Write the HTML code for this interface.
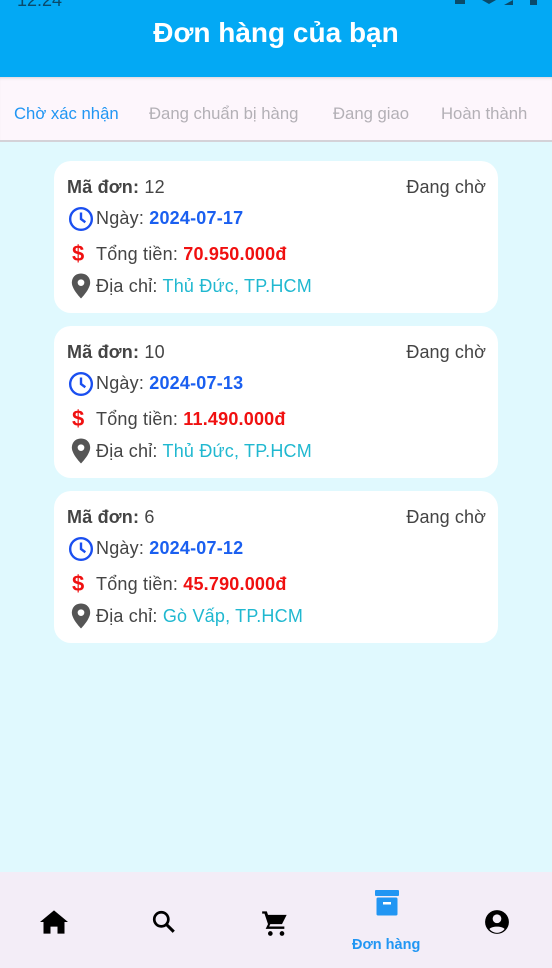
<!DOCTYPE html>
<html><head><meta charset="utf-8"><style>
*{margin:0;padding:0;box-sizing:border-box}
body{width:552px;height:968px;overflow:hidden;background:#e0f9fe;font-family:"Liberation Sans",sans-serif;position:relative}
.hdr{position:absolute;left:0;top:0;width:552px;height:77px;background:#03a9f4}
.hdr h1{position:absolute;top:17px;width:100%;text-align:center;color:#fff;font-size:28px;font-weight:bold}
.sb{position:absolute;top:-10px;left:17px;color:#0a4a6a;font-size:18px}
.tabs{position:absolute;top:77px;left:0;width:552px;height:65px;background:#fdf6fc;border-bottom:2px solid #d4d2d8;box-shadow:inset 0 3px 3px -2px rgba(0,0,0,.15)}
.tabs span{position:absolute;top:27px;font-size:16.7px;color:#b3b0b6;white-space:nowrap}
.card{position:absolute;left:54px;width:444px;height:152px;background:#fff;border-radius:17px}
.row{position:absolute;left:13px;font-size:18px;letter-spacing:0.2px;color:#444;white-space:nowrap}
.st{position:absolute;right:12px;top:15px;font-size:18px;letter-spacing:0.1px;color:#444}
.b{font-weight:bold}
.blue{color:#1a5ff0;font-weight:bold}.red{color:#f01010;font-weight:bold}.cy{color:#20b8d0}
svg{position:absolute}
.nav{position:absolute;left:0;top:872px;width:552px;height:96px;background:#f3edf7}
</style></head><body>
<div class="hdr"><div class="sb">12:24</div>
<svg style="left:452px;top:0" width="95" height="10"><rect x="3" y="0" width="10" height="4" fill="#0a4a6a"/><path d="M30 0h14l-7 4z" fill="#0a4a6a"/><path d="M52 5l9-5v5z" fill="#0a4a6a"/><rect x="78" y="0" width="7" height="5" fill="#0a4a6a"/></svg>
<h1>Đơn hàng của bạn</h1></div>
<div class="tabs"><span style="left:14px;color:#2196f3">Chờ xác nhận</span><span style="left:149px">Đang chuẩn bị hàng</span><span style="left:333px">Đang giao</span><span style="left:441px">Hoàn thành</span></div>

<div class="card" style="top:161px">
<div class="row" style="top:16px"><span class="b">Mã đơn:</span> 12</div><div class="st" style="top:16px">Đang chờ</div>
<svg style="left:14px;top:45px" width="26" height="26" viewBox="0 0 24 24"><circle cx="12" cy="12" r="10" fill="none" stroke="#1a4ff0" stroke-width="2.2"/><path d="M12 6v6l4 3" fill="none" stroke="#1a4ff0" stroke-width="2.2"/></svg>
<div class="row" style="top:47px;left:42px">Ngày: <span class="blue">2024-07-17</span></div>
<div class="row" style="top:80px;left:18px;color:#f01010;font-size:22px;font-weight:bold">$</div>
<div class="row" style="top:83px;left:42px">Tổng tiền: <span class="red">70.950.000đ</span></div>
<svg style="left:17px;top:112px" width="20" height="26" viewBox="0 0 24 30"><path d="M12 0C5 0 1 5 1 11c0 8 11 19 11 19s11-11 11-19C23 5 19 0 12 0z" fill="#555"/><circle cx="12" cy="11" r="4" fill="#fff"/></svg>
<div class="row" style="top:115px;left:42px">Địa chỉ: <span class="cy">Thủ Đức, TP.HCM</span></div>
</div>

<div class="card" style="top:326px">
<div class="row" style="top:16px"><span class="b">Mã đơn:</span> 10</div><div class="st" style="top:16px">Đang chờ</div>
<svg style="left:14px;top:45px" width="26" height="26" viewBox="0 0 24 24"><circle cx="12" cy="12" r="10" fill="none" stroke="#1a4ff0" stroke-width="2.2"/><path d="M12 6v6l4 3" fill="none" stroke="#1a4ff0" stroke-width="2.2"/></svg>
<div class="row" style="top:47px;left:42px">Ngày: <span class="blue">2024-07-13</span></div>
<div class="row" style="top:80px;left:18px;color:#f01010;font-size:22px;font-weight:bold">$</div>
<div class="row" style="top:83px;left:42px">Tổng tiền: <span class="red">11.490.000đ</span></div>
<svg style="left:17px;top:112px" width="20" height="26" viewBox="0 0 24 30"><path d="M12 0C5 0 1 5 1 11c0 8 11 19 11 19s11-11 11-19C23 5 19 0 12 0z" fill="#555"/><circle cx="12" cy="11" r="4" fill="#fff"/></svg>
<div class="row" style="top:115px;left:42px">Địa chỉ: <span class="cy">Thủ Đức, TP.HCM</span></div>
</div>

<div class="card" style="top:491px">
<div class="row" style="top:16px"><span class="b">Mã đơn:</span> 6</div><div class="st" style="top:16px">Đang chờ</div>
<svg style="left:14px;top:45px" width="26" height="26" viewBox="0 0 24 24"><circle cx="12" cy="12" r="10" fill="none" stroke="#1a4ff0" stroke-width="2.2"/><path d="M12 6v6l4 3" fill="none" stroke="#1a4ff0" stroke-width="2.2"/></svg>
<div class="row" style="top:47px;left:42px">Ngày: <span class="blue">2024-07-12</span></div>
<div class="row" style="top:80px;left:18px;color:#f01010;font-size:22px;font-weight:bold">$</div>
<div class="row" style="top:83px;left:42px">Tổng tiền: <span class="red">45.790.000đ</span></div>
<svg style="left:17px;top:112px" width="20" height="26" viewBox="0 0 24 30"><path d="M12 0C5 0 1 5 1 11c0 8 11 19 11 19s11-11 11-19C23 5 19 0 12 0z" fill="#555"/><circle cx="12" cy="11" r="4" fill="#fff"/></svg>
<div class="row" style="top:115px;left:42px">Địa chỉ: <span class="cy">Gò Vấp, TP.HCM</span></div>
</div>

<div class="nav">
<svg style="left:40px;top:38px" width="28" height="24" viewBox="0 0 24 20"><path d="M12 0L0 10h3v10h6v-6h6v6h6V10h3z" fill="#000"/></svg>
<svg style="left:151px;top:37px" width="26" height="26" viewBox="0 0 24 24"><circle cx="9.5" cy="9.5" r="6.5" fill="none" stroke="#000" stroke-width="2.5"/><path d="M14 14l7 7" stroke="#000" stroke-width="2.8"/></svg>
<svg style="left:260px;top:37px" width="30" height="28" viewBox="0 0 24 24"><path d="M1 2h4l1 3h16l-4 8H8l-1 2h13v2H4l2-4L3 4H1z" fill="#000"/><circle cx="8" cy="21" r="2" fill="#000"/><circle cx="18" cy="21" r="2" fill="#000"/></svg>
<svg style="left:375px;top:18px" width="24" height="26" viewBox="0 0 24 26"><rect x="0" y="0" width="24" height="6" rx="1" fill="#2196f3"/><rect x="1.5" y="7.5" width="21" height="18" rx="1.5" fill="#2196f3"/><rect x="8" y="12" width="8" height="2.5" fill="#fff"/></svg>
<div style="position:absolute;left:352px;top:65px;font-size:14.5px;font-weight:bold;color:#2196f3">Đơn hàng</div>
<svg style="left:484px;top:37px" width="26" height="26" viewBox="0 0 24 24"><circle cx="12" cy="12" r="11" fill="#000"/><circle cx="12" cy="9" r="4" fill="#f3edf7"/><path d="M5 18.5c2-3 12-3 14 0c-2 2.5-4.5 3.5-7 3.5s-5-1-7-3.5z" fill="#f3edf7"/></svg>
</div>
</body></html>
